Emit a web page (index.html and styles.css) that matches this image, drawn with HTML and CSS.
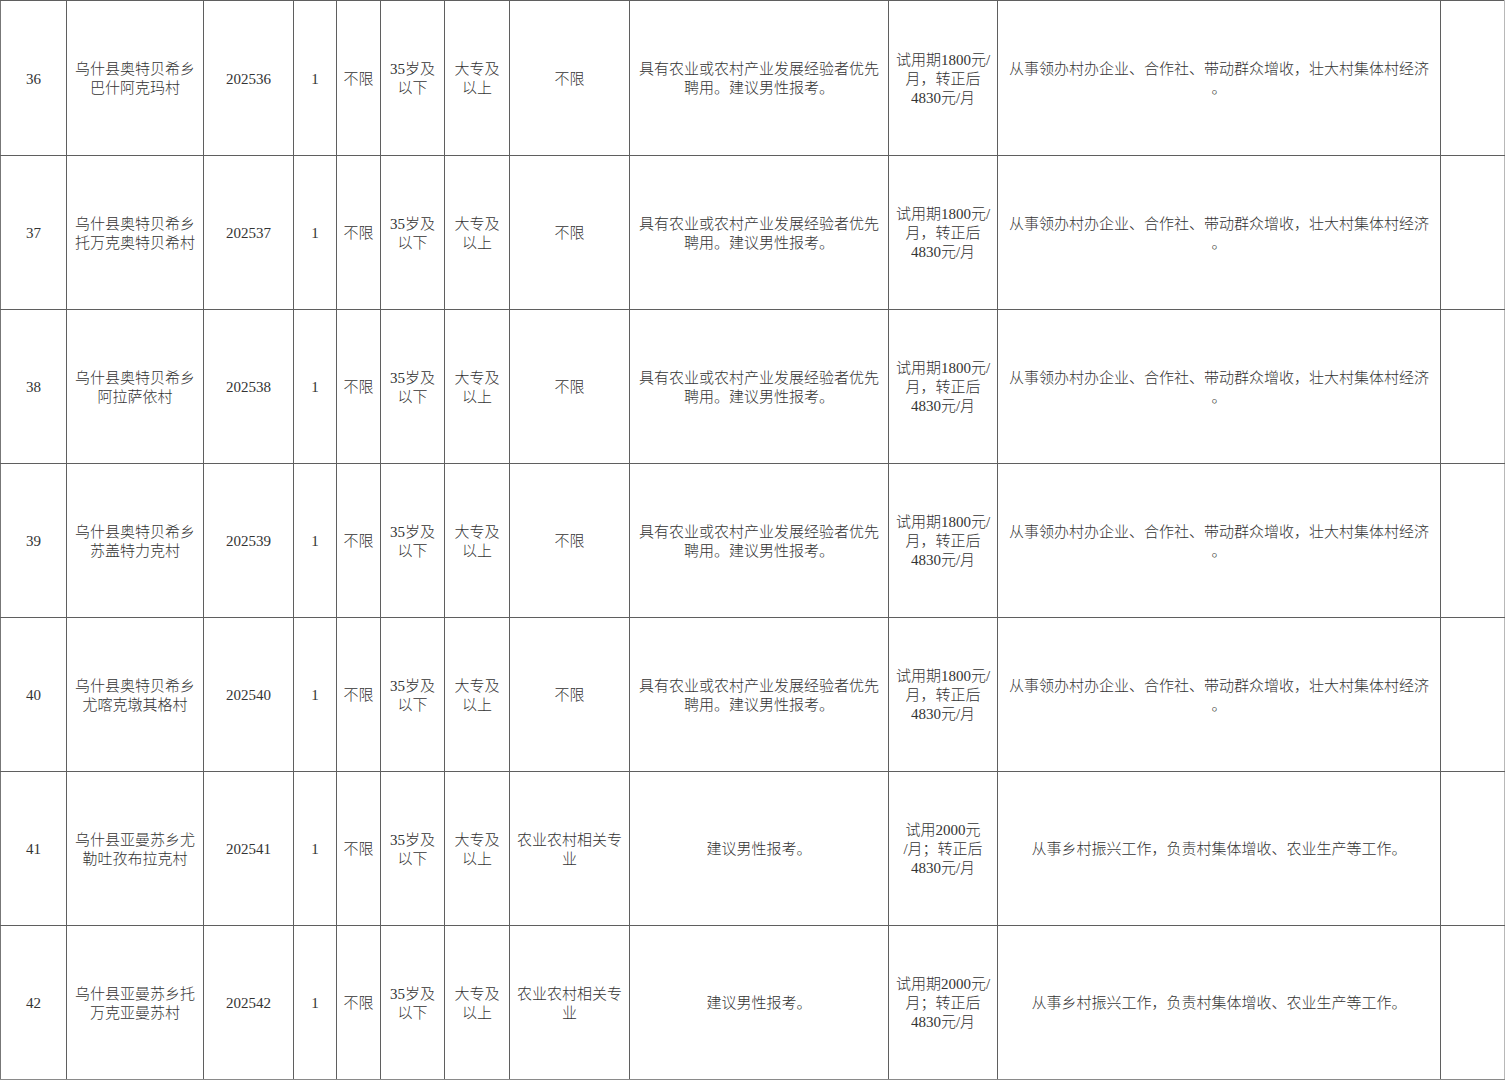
FILE: index.html
```html
<!DOCTYPE html>
<html lang="zh-CN">
<head>
<meta charset="utf-8">
<title>岗位表</title>
<link rel="stylesheet" href="styles.css">
</head>
<body>
<table class="sheet">
  <colgroup>
    <col class="c-no"><col class="c-place"><col class="c-code"><col class="c-num"><col class="c-any">
    <col class="c-age"><col class="c-edu"><col class="c-major"><col class="c-req"><col class="c-pay">
    <col class="c-duty"><col class="c-note">
  </colgroup>
  <tbody>
    <tr>
      <td>36</td><td>乌什县奥特贝希乡<br>巴什阿克玛村</td><td>202536</td><td>1</td><td>不限</td>
      <td>35岁及<br>以下</td><td>大专及<br>以上</td><td>不限</td>
      <td>具有农业或农村产业发展经验者优先<br>聘用。建议男性报考。</td>
      <td>试用期1800元/<br>月，转正后<br>4830元/月</td>
      <td>从事领办村办企业、合作社、带动群众增收，壮大村集体村经济<br>。</td><td></td>
    </tr>
    <tr>
      <td>37</td><td>乌什县奥特贝希乡<br>托万克奥特贝希村</td><td>202537</td><td>1</td><td>不限</td>
      <td>35岁及<br>以下</td><td>大专及<br>以上</td><td>不限</td>
      <td>具有农业或农村产业发展经验者优先<br>聘用。建议男性报考。</td>
      <td>试用期1800元/<br>月，转正后<br>4830元/月</td>
      <td>从事领办村办企业、合作社、带动群众增收，壮大村集体村经济<br>。</td><td></td>
    </tr>
    <tr>
      <td>38</td><td>乌什县奥特贝希乡<br>阿拉萨依村</td><td>202538</td><td>1</td><td>不限</td>
      <td>35岁及<br>以下</td><td>大专及<br>以上</td><td>不限</td>
      <td>具有农业或农村产业发展经验者优先<br>聘用。建议男性报考。</td>
      <td>试用期1800元/<br>月，转正后<br>4830元/月</td>
      <td>从事领办村办企业、合作社、带动群众增收，壮大村集体村经济<br>。</td><td></td>
    </tr>
    <tr>
      <td>39</td><td>乌什县奥特贝希乡<br>苏盖特力克村</td><td>202539</td><td>1</td><td>不限</td>
      <td>35岁及<br>以下</td><td>大专及<br>以上</td><td>不限</td>
      <td>具有农业或农村产业发展经验者优先<br>聘用。建议男性报考。</td>
      <td>试用期1800元/<br>月，转正后<br>4830元/月</td>
      <td>从事领办村办企业、合作社、带动群众增收，壮大村集体村经济<br>。</td><td></td>
    </tr>
    <tr>
      <td>40</td><td>乌什县奥特贝希乡<br>尤喀克墩其格村</td><td>202540</td><td>1</td><td>不限</td>
      <td>35岁及<br>以下</td><td>大专及<br>以上</td><td>不限</td>
      <td>具有农业或农村产业发展经验者优先<br>聘用。建议男性报考。</td>
      <td>试用期1800元/<br>月，转正后<br>4830元/月</td>
      <td>从事领办村办企业、合作社、带动群众增收，壮大村集体村经济<br>。</td><td></td>
    </tr>
    <tr>
      <td>41</td><td>乌什县亚曼苏乡尤<br>勒吐孜布拉克村</td><td>202541</td><td>1</td><td>不限</td>
      <td>35岁及<br>以下</td><td>大专及<br>以上</td><td>农业农村相关专<br>业</td>
      <td>建议男性报考。</td>
      <td>试用2000元<br>/月；转正后<br>4830元/月</td>
      <td>从事乡村振兴工作，负责村集体增收、农业生产等工作。</td><td></td>
    </tr>
    <tr>
      <td>42</td><td>乌什县亚曼苏乡托<br>万克亚曼苏村</td><td>202542</td><td>1</td><td>不限</td>
      <td>35岁及<br>以下</td><td>大专及<br>以上</td><td>农业农村相关专<br>业</td>
      <td>建议男性报考。</td>
      <td>试用期2000元/<br>月；转正后<br>4830元/月</td>
      <td>从事乡村振兴工作，负责村集体增收、农业生产等工作。</td><td></td>
    </tr>
  </tbody>
</table>
</body>
</html>
```

FILE: styles.css
```css
html, body {
  margin: 0;
  padding: 0;
  background: #ffffff;
}

.sheet {
  border-collapse: collapse;
  table-layout: fixed;
  width: 1504px;
  font-family: "Liberation Serif", "Noto Sans CJK SC", serif;
  font-size: 15px;
  font-weight: 300;
  line-height: 19px;
  color: #333333;
}

.c-no { width: 66px; }
.c-place { width: 137px; }
.c-code { width: 90px; }
.c-num { width: 43px; }
.c-any { width: 44px; }
.c-age { width: 64px; }
.c-edu { width: 65px; }
.c-major { width: 120px; }
.c-req { width: 259px; }
.c-pay { width: 109px; }
.c-duty { width: 443px; }
.c-note { width: 64px; }

.sheet td {
  height: 151px;
  padding: 2px 3px 0;
  border: 1px solid #5f5f5f;
  text-align: center;
  vertical-align: middle;
  white-space: nowrap;
  overflow: hidden;
}

.sheet tr:first-child td {
  height: 152px;
}

.sheet td:first-child {
  border-left-color: #777777;
}

.sheet td:nth-child(2) {
  border-left-color: #9a9a9a;
}

.sheet td:last-child {
  border-right-color: #b8b8b8;
}

.sheet tr:last-child td {
  border-bottom-color: #8a8a8a;
}
```
